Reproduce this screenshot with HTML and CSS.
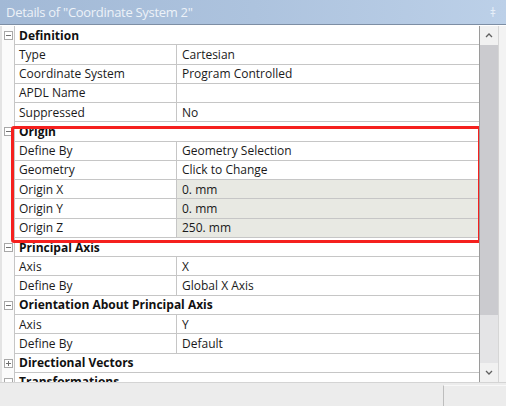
FILE: index.html
```html
<!DOCTYPE html>
<html>
<head>
<meta charset="utf-8">
<link rel="stylesheet" href="styles.css">
</head>
<body>
<div class="window">
  <div class="titlebar">
    <span class="title">Details of "Coordinate System 2"</span>
    <span class="pin">ǂ</span>
  </div>
  <div class="main">
    <div class="grid">
      <div class="row head"><div class="gutter"><span class="box minus"></span></div><div class="hcell">Definition</div></div>
      <div class="row"><div class="gutter"></div><div class="name">Type</div><div class="val">Cartesian</div></div>
      <div class="row"><div class="gutter"></div><div class="name">Coordinate System</div><div class="val">Program Controlled</div></div>
      <div class="row"><div class="gutter"></div><div class="name">APDL Name</div><div class="val"></div></div>
      <div class="row"><div class="gutter"></div><div class="name">Suppressed</div><div class="val">No</div></div>
      <div class="row head"><div class="gutter"><span class="box minus"></span></div><div class="hcell">Origin</div></div>
      <div class="row"><div class="gutter"></div><div class="name">Define By</div><div class="val">Geometry Selection</div></div>
      <div class="row"><div class="gutter"></div><div class="name">Geometry</div><div class="val">Click to Change</div></div>
      <div class="row"><div class="gutter"></div><div class="name">Origin X</div><div class="val ro">0. mm</div></div>
      <div class="row"><div class="gutter"></div><div class="name">Origin Y</div><div class="val ro">0. mm</div></div>
      <div class="row"><div class="gutter"></div><div class="name">Origin Z</div><div class="val ro">250. mm</div></div>
      <div class="row head"><div class="gutter"><span class="box minus"></span></div><div class="hcell">Principal Axis</div></div>
      <div class="row"><div class="gutter"></div><div class="name">Axis</div><div class="val">X</div></div>
      <div class="row"><div class="gutter"></div><div class="name">Define By</div><div class="val">Global X Axis</div></div>
      <div class="row head"><div class="gutter"><span class="box minus"></span></div><div class="hcell">Orientation About Principal Axis</div></div>
      <div class="row"><div class="gutter"></div><div class="name">Axis</div><div class="val">Y</div></div>
      <div class="row"><div class="gutter"></div><div class="name">Define By</div><div class="val">Default</div></div>
      <div class="row head"><div class="gutter"><span class="box plus"></span></div><div class="hcell">Directional Vectors</div></div>
      <div class="row head"><div class="gutter"><span class="box minus"></span></div><div class="hcell">Transformations</div></div>
      <div class="highlight"></div>
    </div>
    <div class="scrollbar">
      <div class="sbtn"><svg width="8" height="5" viewBox="0 0 8 5"><path d="M1 4 L4 1 L7 4" fill="none" stroke="#606060" stroke-width="1.3"/></svg></div>
      <div class="thumb"></div>
      <div class="track"></div>
      <div class="sbtn"><svg width="8" height="5" viewBox="0 0 8 5"><path d="M1 1 L4 4 L7 1" fill="none" stroke="#606060" stroke-width="1.3"/></svg></div>
    </div>
    <div class="edge"></div>
  </div>
  <div class="footer">
    <div class="fleft"></div>
    <div class="fright"></div>
  </div>
</div>
</body>
</html>
```
FILE: styles.css
```css
html, body {
  margin: 0;
  padding: 0;
}
body {
  width: 506px;
  height: 406px;
  overflow: hidden;
  background: #ffffff;
  font-family: "Open Sans", "Noto Sans", sans-serif;
}
.window {
  width: 506px;
  height: 406px;
  display: flex;
  flex-direction: column;
}
.titlebar {
  height: 25px;
  flex: none;
  box-sizing: border-box;
  background: linear-gradient(to right, #a2b9d6 0%, #adc3de 50%, #bcd0e8 100%);
  border-bottom: 1px solid #7d8ea4;
  display: flex;
  align-items: center;
  justify-content: space-between;
  padding: 0 10px 0 6px;
}
.title {
  color: #edf2f8;
  font-size: 13px;
  letter-spacing: -0.3px;
}
.pin {
  color: #e6eef8;
  font-size: 12px;
}
.main {
  flex: none;
  height: 357px;
  display: flex;
  overflow: hidden;
  padding-top: 1px;
  box-sizing: border-box;
  background: #ffffff;
}
.grid {
  position: relative;
  width: 480px;
  flex: none;
  overflow: hidden;
  border-right: 1px solid #9a9a9a;
  box-sizing: border-box;
}
.row {
  height: 19.28px;
  box-sizing: border-box;
  display: flex;
  border-bottom: 1px solid #c6c6c6;
  font-size: 12px;
  color: #1a1a1a;
}
.gutter {
  width: 15px;
  flex: none;
  box-sizing: border-box;
  border-left: 2px solid #e4e4e4;
  border-right: 1px solid #c6c6c6;
  background: #fbfbfb;
  margin-bottom: -1px;
  display: flex;
  align-items: center;
  justify-content: center;
}
.name {
  width: 162px;
  flex: none;
  box-sizing: border-box;
  border-right: 1px solid #c6c6c6;
  padding-left: 4px;
  display: flex;
  align-items: center;
  white-space: nowrap;
}
.val {
  flex: 1;
  padding-left: 5px;
  display: flex;
  align-items: center;
  white-space: nowrap;
}
.val.ro {
  background: #e8e9e3;
}
.hcell {
  flex: 1;
  padding-left: 4px;
  display: flex;
  align-items: center;
  font-weight: bold;
  font-size: 12px;
  color: #111;
}
.box {
  position: relative;
  width: 9px;
  height: 9px;
  box-sizing: border-box;
  border: 1px solid #a8a8a8;
  background: #fff;
}
.box::before {
  content: "";
  position: absolute;
  left: 1px;
  right: 1px;
  top: 3px;
  height: 1px;
  background: #707070;
}
.box.plus::after {
  content: "";
  position: absolute;
  top: 1px;
  bottom: 1px;
  left: 3px;
  width: 1px;
  background: #707070;
}
.highlight {
  position: absolute;
  left: 11px;
  top: 100px;
  width: 470px;
  height: 117px;
  box-sizing: border-box;
  border: 3px solid #f5201e;
  border-radius: 3px;
  pointer-events: none;
}
.scrollbar {
  width: 18px;
  flex: none;
  display: flex;
  flex-direction: column;
  background: #e9e9eb;
}
.sbtn {
  height: 19px;
  flex: none;
  display: flex;
  align-items: center;
  justify-content: center;
  background: #f1f1f1;
}
.thumb {
  height: 270px;
  flex: none;
  background: #cbcbcf;
}
.track {
  flex: 1;
  background: #e4e4e6;
}
.edge {
  flex: 1;
  background: #f3f3f3;
  border-left: 1px solid #d6d6d6;
}
.footer {
  flex: 1;
  display: flex;
  background: #ececec;
  border-top: 1px solid #d4d4d4;
}
.fleft {
  width: 443px;
  flex: none;
}
.fright {
  flex: 1;
  border-left: 1px solid #bdbdbd;
  border-top: 1px solid #f8f8f8;
  margin-top: 2px;
}
```
